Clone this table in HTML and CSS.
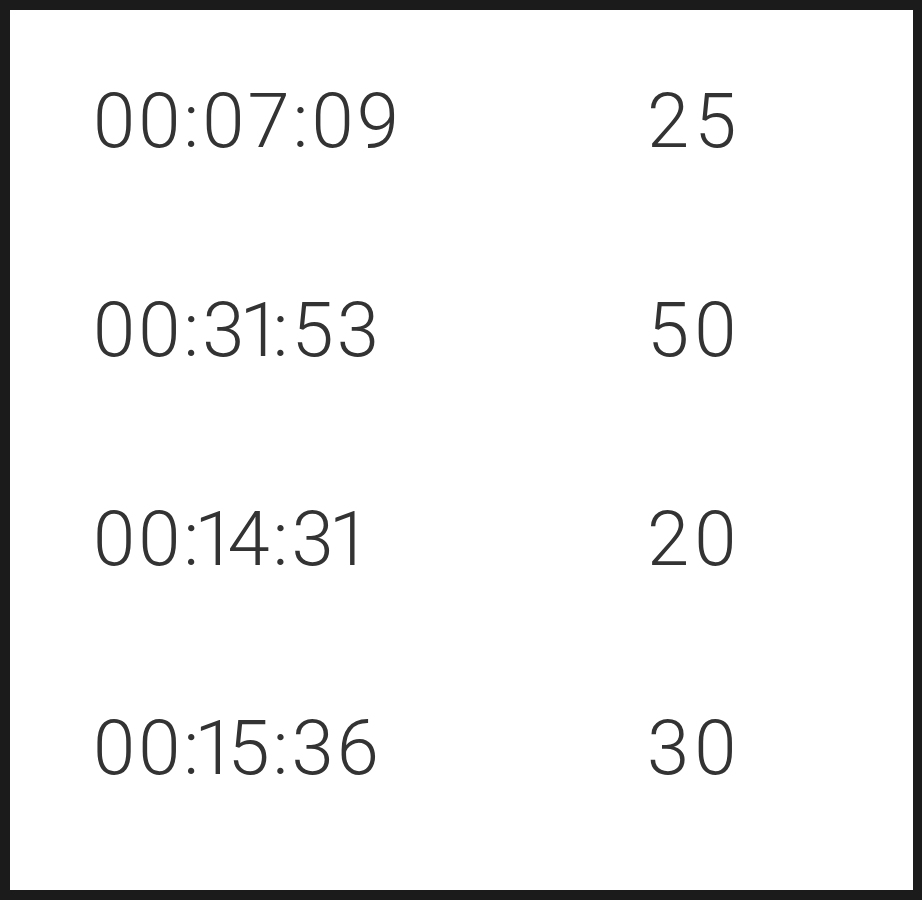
FILE: index.html
```html
<!DOCTYPE html>
<html>
<head>
<meta charset="utf-8">
<link rel="stylesheet" href="styles.css">
</head>
<body>
<div class="frame">
  <div class="sheet">
    <div class="row"><span class="time">00:07:09</span><span class="count">25</span></div>
    <div class="row"><span class="time">00:3<span class="one">1</span>:53</span><span class="count">50</span></div>
    <div class="row"><span class="time">00:<span class="one">1</span>4:3<span class="one">1</span></span><span class="count">20</span></div>
    <div class="row"><span class="time">00:<span class="one">1</span>5:36</span><span class="count">30</span></div>
  </div>
</div>
</body>
</html>
```
FILE: styles.css
```css
html, body {
  margin: 0;
  padding: 0;
  background: #1b1b1b;
}
.frame {
  width: 922px;
  height: 900px;
  box-sizing: border-box;
  padding: 10px 9px 10px 10px;
  background: #1b1b1b;
}
.sheet {
  height: 100%;
  background: #ffffff;
  padding: 6px 0 0 83px;
  box-sizing: border-box;
  font-family: Roboto, sans-serif;
  font-weight: 300;
  font-size: 76px;
  color: #333333;
}
.row {
  display: grid;
  grid-template-columns: 554px auto;
  height: 209px;
  align-items: center;
}
.time, .count {
  letter-spacing: 3px;
  white-space: nowrap;
}
.count {
  letter-spacing: 5px;
}
.one {
  margin-left: -8px;
  margin-right: -12px;
}
```
